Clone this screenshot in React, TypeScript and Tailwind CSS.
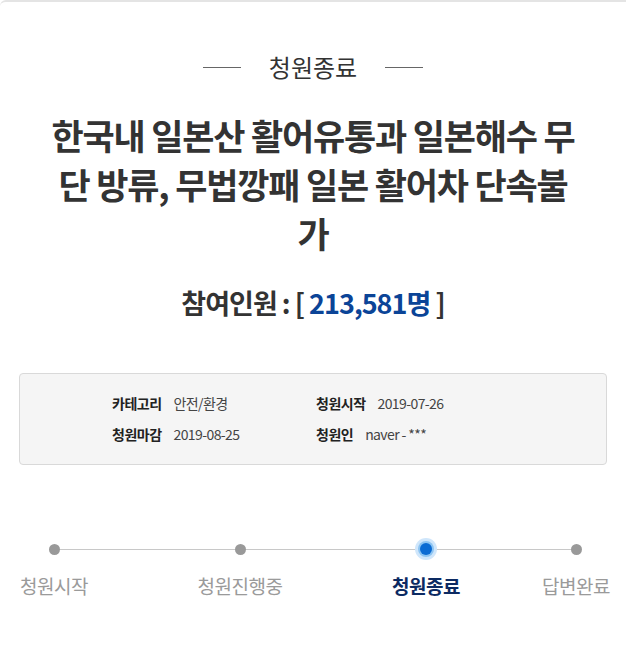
import React from 'react';

const FONT = { fontFamily: '"Noto Sans CJK KR", "Noto Sans", sans-serif' };

const steps = [
  { label: '청원시작', active: false, ml: 'ml-0' },
  { label: '청원진행중', active: false, ml: 'ml-[86px]' },
  { label: '청원종료', active: true, ml: 'ml-[86px]' },
  { label: '답변완료', active: false, ml: 'ml-[50px]' },
];

function InfoItem({ label, value, width }: { label: string; value: string; width: string }) {
  return (
    <div className={`flex items-center ${width}`}>
      <span className="text-[14px] font-bold tracking-[-0.5px] text-[#222]">{label}</span>
      <span className="ml-[12px] text-[14px] tracking-[-0.6px] text-[#444]">{value}</span>
    </div>
  );
}

export default function App() {
  return (
    <div className="min-h-[650px] w-full rounded-tl-[6px] border-t-2 border-[#e4e4e4] bg-white" style={FONT}>
      {/* status header */}
      <div className="flex items-center justify-center pt-[48px]">
        <span className="block h-px w-[38px] bg-[#666]" />
        <span className="mx-[28px] text-[24px] leading-[34px] text-[#333]">청원종료</span>
        <span className="block h-px w-[38px] bg-[#666]" />
      </div>

      {/* title */}
      <h1 className="mx-auto mt-[26px] w-[530px] break-all text-center text-[35px] font-bold leading-[49px] tracking-[-1.2px] text-[#333]">
        한국내 일본산 활어유통과 일본해수 무단 방류, 무법깡패 일본 활어차 단속불가
      </h1>

      {/* participants */}
      <p className="mt-[28px] text-center text-[27px] font-bold leading-[36px] tracking-[-1px] text-[#333]">
        참여인원 : [ <span className="text-[#0b4497]">213,581명</span> ]
      </p>

      {/* info box */}
      <div className="mx-[19px] mt-[52px] h-[92px] rounded-[4px] border border-[#d9d9d9] bg-[#f5f5f5] pl-[92px] pt-[14px]">
        <div className="flex h-[31px]">
          <InfoItem label="카테고리" value="안전/환경" width="w-[204px]" />
          <InfoItem label="청원시작" value="2019-07-26" width="w-[220px]" />
        </div>
        <div className="flex h-[31px]">
          <InfoItem label="청원마감" value="2019-08-25" width="w-[204px]" />
          <InfoItem label="청원인" value="naver - ***" width="w-[220px]" />
        </div>
      </div>

      {/* progress */}
      <div className="relative mt-[73px] flex pl-[4px]">
        <span className="absolute left-[53px] top-[11px] h-px w-[522px] bg-[#c8c8c8]" />
        {steps.map((s) => (
          <div key={s.label} className={`relative flex w-[100px] flex-col items-center ${s.ml}`}>
            <div className="flex h-[22px] w-[22px] items-center justify-center">
              {s.active ? (
                <span className="flex h-[22px] w-[22px] items-center justify-center rounded-full bg-[#cfe6fb]">
                  <span className="block h-[12px] w-[12px] rounded-full bg-[#0b6bd3] ring-2 ring-[#8cc4f2]" />
                </span>
              ) : (
                <span className="block h-[11px] w-[11px] rounded-full bg-[#999]" />
              )}
            </div>
            <span
              className={`mt-[13px] whitespace-nowrap text-[19px] leading-[26px] tracking-[-0.5px] ${
                s.active ? 'font-bold text-[#0c2a62]' : 'text-[#9a9a9a]'
              }`}
            >
              {s.label}
            </span>
          </div>
        ))}
      </div>
    </div>
  );
}
